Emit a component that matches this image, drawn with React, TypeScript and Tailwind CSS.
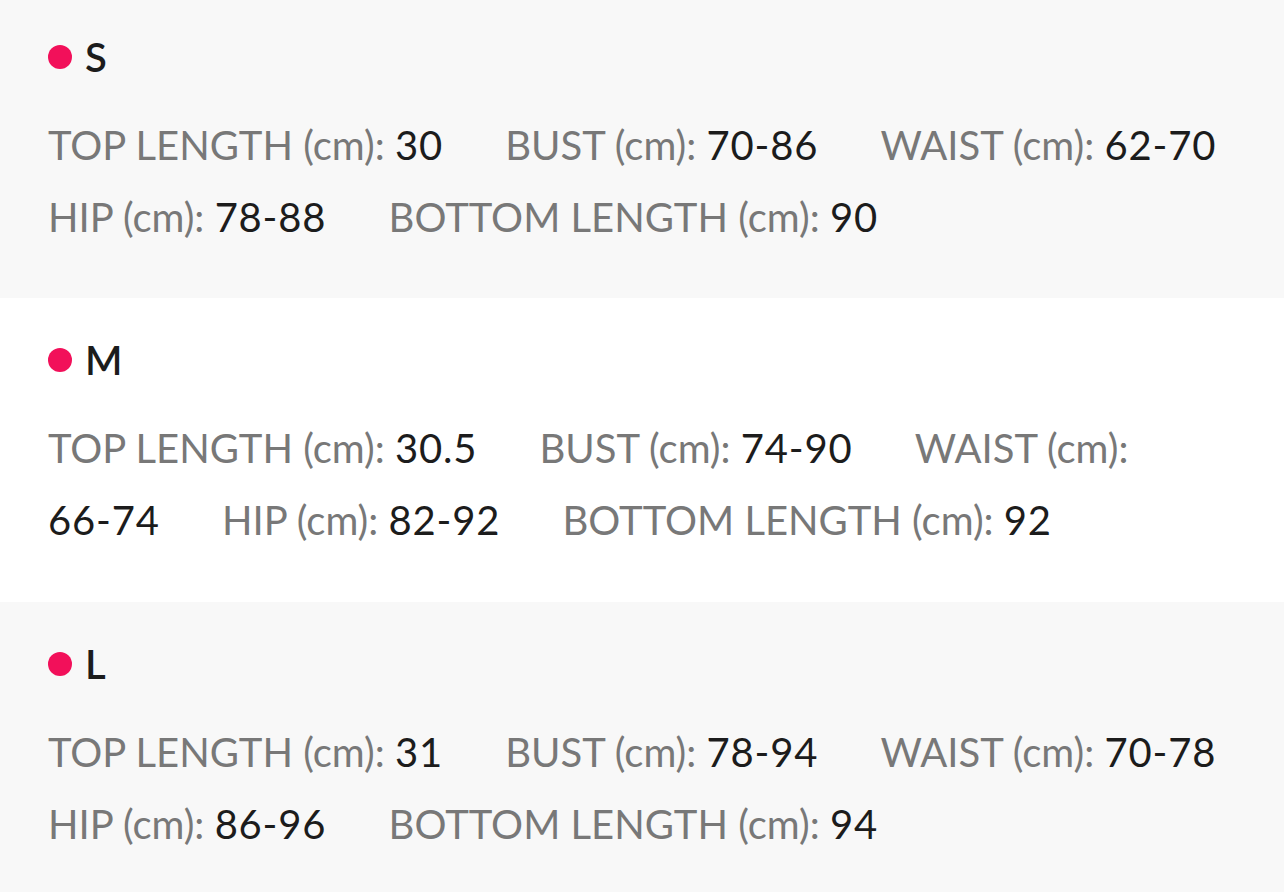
import React from 'react';

type Spec = { label: string; value: string };
type Size = { name: string; specs: Spec[]; tinted: boolean; first?: boolean };

const sizes: Size[] = [
  {
    name: 'S',
    tinted: true,
    first: true,
    specs: [
      { label: 'TOP LENGTH (cm):', value: '30' },
      { label: 'BUST (cm):', value: '70-86' },
      { label: 'WAIST (cm):', value: '62-70' },
      { label: 'HIP (cm):', value: '78-88' },
      { label: 'BOTTOM LENGTH (cm):', value: '90' },
    ],
  },
  {
    name: 'M',
    tinted: false,
    specs: [
      { label: 'TOP LENGTH (cm):', value: '30.5' },
      { label: 'BUST (cm):', value: '74-90' },
      { label: 'WAIST (cm):', value: '66-74' },
      { label: 'HIP (cm):', value: '82-92' },
      { label: 'BOTTOM LENGTH (cm):', value: '92' },
    ],
  },
  {
    name: 'L',
    tinted: true,
    specs: [
      { label: 'TOP LENGTH (cm):', value: '31' },
      { label: 'BUST (cm):', value: '78-94' },
      { label: 'WAIST (cm):', value: '70-78' },
      { label: 'HIP (cm):', value: '86-96' },
      { label: 'BOTTOM LENGTH (cm):', value: '94' },
    ],
  },
];

function SizeBlock({ size }: { size: Size }) {
  // first block is cut off at the top of the page a little
  const pad = size.first ? 'pt-[21px] pb-[45px]' : 'pt-[26px] pb-[46px]';
  return (
    <section className={(size.tinted ? 'bg-[#f8f8f8] ' : 'bg-white ') + 'px-[48px] ' + pad}>
      <div className="flex items-center gap-[13px] h-[72px]">
        <span className="w-[24px] h-[24px] rounded-full bg-[#f2105a]" />
        <span className="text-[40px] font-semibold text-[#1c1c1c]">{size.name}</span>
      </div>
      <p className="mt-[16px] text-[40px] leading-[72px]">
        {size.specs.map((s, i) => (
          <React.Fragment key={i}>
            {i > 0 && <span className="[word-spacing:52px]"> </span>}
            <span className="text-[#787878]">{s.label} </span>
            <span className="text-[#1c1c1c] whitespace-nowrap tracking-[0.8px]">{s.value}</span>
          </React.Fragment>
        ))}
      </p>
    </section>
  );
}

export default function App() {
  return (
    <div className="w-[1284px] h-[892px] overflow-hidden bg-white font-['Lato',sans-serif]">
      {sizes.map((s) => (
        <SizeBlock key={s.name} size={s} />
      ))}
    </div>
  );
}
